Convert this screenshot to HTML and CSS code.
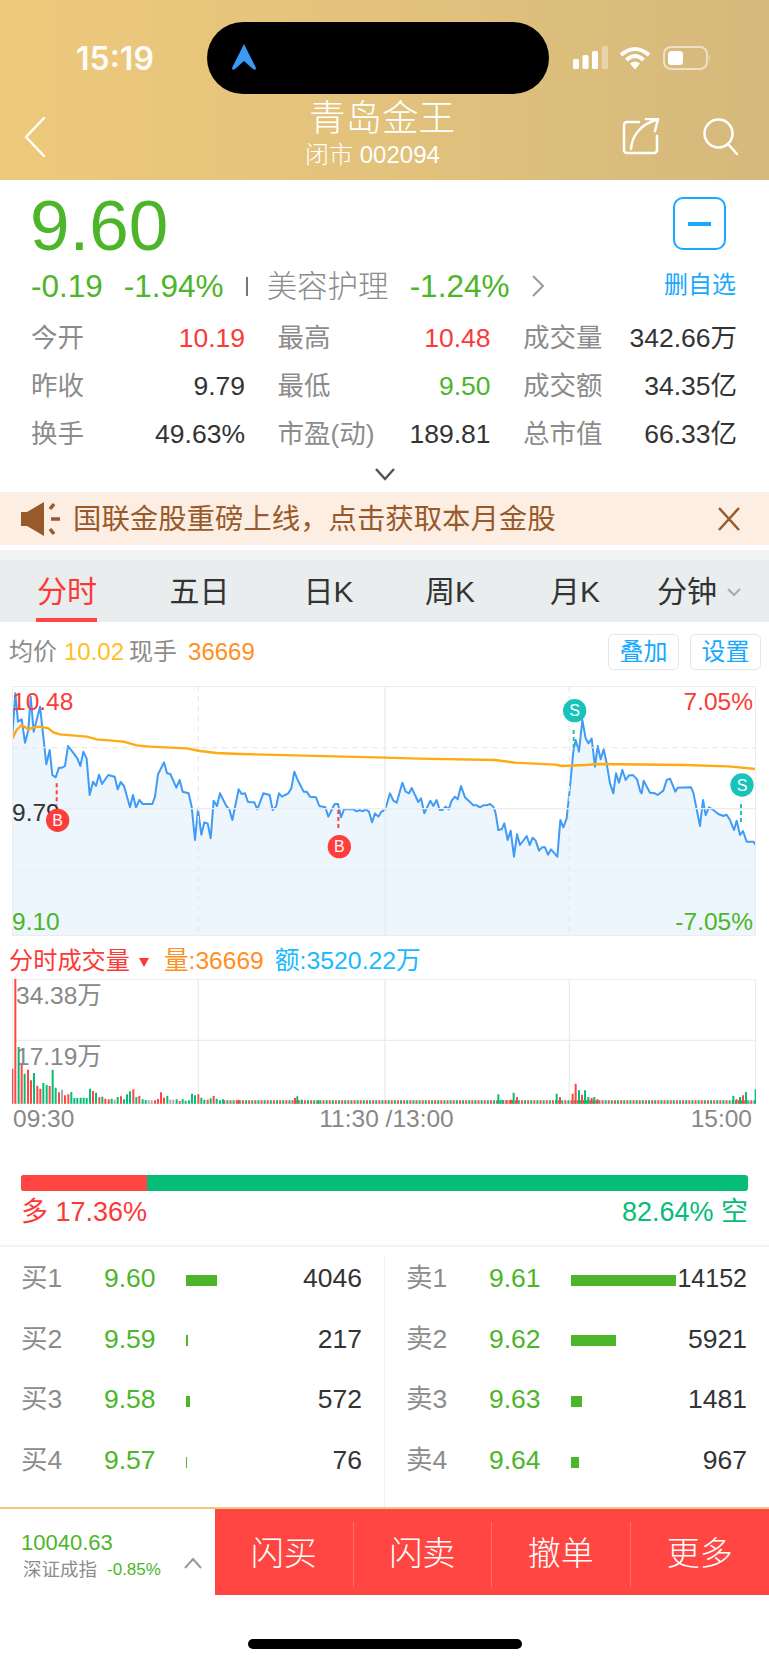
FILE: index.html
```html
<!DOCTYPE html>
<html lang="zh">
<head>
<meta charset="utf-8">
<title>青岛金王</title>
<link rel="stylesheet" href="styles.css">
</head>
<body>
<div class="page">
  <header class="header">
    <div class="status">
      <span class="time">15:19</span>
      <div class="island">
        <svg class="nav-arrow" width="26" height="28" viewBox="0 0 26 28"><path d="M13 1 L25 25 Q25 28 22 26 L13 18 L4 26 Q1 28 1 25 Z"/></svg>
      </div>
      <div class="status-right">
        <svg width="36" height="24" viewBox="0 0 36 24"><rect class="wh" x="0" y="13" width="6" height="10" rx="1.5"/><rect class="wh" x="9.5" y="9" width="6" height="14" rx="1.5"/><rect class="wh" x="19" y="5" width="6" height="18" rx="1.5"/><rect class="wh-dim" x="29" y="0" width="6" height="23" rx="1.5"/></svg>
        <svg class="wifi" width="32" height="24" viewBox="0 0 32 24"><path class="wifi-s" d="M2 9 Q16 -3 30 9"/><path class="wifi-s" d="M7.5 14 Q16 6 24.5 14"/><path class="wh" d="M11 17.5 Q16 13.5 21 17.5 L16 23.5 Z"/></svg>
        <svg class="batt" width="50" height="24" viewBox="0 0 50 24"><rect class="batt-box" x="1" y="1" width="43" height="22" rx="7"/><rect class="wh" x="5" y="5" width="15" height="14" rx="3.5"/><path class="wh-dim" d="M46 8 Q49 12 46 16 Z"/></svg>
      </div>
    </div>
    <nav class="nav">
      <svg class="back" width="22" height="40" viewBox="0 0 22 40"><path class="nav-s" d="M20 1 L2 20 L20 39"/></svg>
      <div class="title-box">
        <div class="title">青岛金王</div>
        <div class="subtitle">闭市 002094</div>
      </div>
      <div class="nav-icons">
        <svg width="38" height="38" viewBox="624 117 38 38"><path class="nav-s" d="M641 121 H629 a3 3 0 0 0 -3 3 V149 a3 3 0 0 0 3 3 H656 a3 3 0 0 0 3 -3 V135"/><path class="nav-s" d="M633 148 C634 135 642 124 658 119 M648 118 L660 118 L657 130"/></svg>
        <svg width="38" height="38" viewBox="704 117 38 38"><circle class="nav-s" cx="720.500" cy="132.500" r="14"/><path class="nav-s" d="M730 143 L739 153"/></svg>
      </div>
    </nav>
  </header>

  <section class="quote">
    <div class="quote-main">
      <div>
        <div class="price">9.60</div>
        <div class="change">
          <span class="chg-a">-0.19</span>
          <span class="chg-b">-1.94%</span>
          <span class="bar-sep"></span>
          <span class="sector">美容护理</span>
          <span class="chg-c">-1.24%</span>
          <svg width="14" height="22" viewBox="0 0 14 22"><path class="chev-grey" d="M2 1 L12 11 L2 21"/></svg>
        </div>
      </div>
      <div class="fav">
        <div class="fav-box"><span class="fav-minus"></span></div>
        <div class="fav-text">删自选</div>
      </div>
    </div>
    <div class="stats">
      <div class="stat"><span class="lbl">今开</span><span class="red">10.19</span></div>
      <div class="stat"><span class="lbl">最高</span><span class="red">10.48</span></div>
      <div class="stat"><span class="lbl">成交量</span><span>342.66万</span></div>
      <div class="stat"><span class="lbl">昨收</span><span>9.79</span></div>
      <div class="stat"><span class="lbl">最低</span><span class="green">9.50</span></div>
      <div class="stat"><span class="lbl">成交额</span><span>34.35亿</span></div>
      <div class="stat"><span class="lbl">换手</span><span>49.63%</span></div>
      <div class="stat"><span class="lbl">市盈(动)</span><span>189.81</span></div>
      <div class="stat"><span class="lbl">总市值</span><span>66.33亿</span></div>
    </div>
    <div class="expand"><svg width="22" height="14" viewBox="0 0 22 14"><path class="chev-dark" d="M2 2 L11 12 L20 2"/></svg></div>
  </section>

  <div class="banner">
    <svg width="40" height="34" viewBox="0 0 40 34"><path class="brown" d="M0 10 H6 L23 0 V34 L6 24 H0 Z"/><path class="brown-s" d="M29 7 L33 2 M30 17 H39 M29 27 L33 32"/></svg>
    <span class="banner-text">国联金股重磅上线&#xFF0C;点击获取本月金股</span>
    <svg class="banner-x" width="24" height="24" viewBox="0 0 24 24"><path class="brown-s thin" d="M2 1 L22 23 M22 1 L2 23"/></svg>
  </div>

  <div class="strip"></div>
  <div class="tabs">
    <div class="tab active">分时</div>
    <div class="tab">五日</div>
    <div class="tab">日K</div>
    <div class="tab">周K</div>
    <div class="tab">月K</div>
    <div class="tab last">分钟<svg width="14" height="9" viewBox="0 0 14 9"><path class="chev-light" d="M1 1 L7 7 L13 1"/></svg></div>
  </div>

  <div class="info">
    <span class="lbl">均价</span><span class="yellow gap-a">10.02</span><span class="lbl gap-b">现手</span><span class="orange gap-c">36669</span>
    <div class="info-btns"><span class="btn">叠加</span><span class="btn">设置</span></div>
  </div>

  <div class="chart">
    <svg class="chart-svg" width="744" height="250" viewBox="36 18 2232 750">
      <polygon class="price-line" points="20,900 20,178 36,178 46,40 54,125 65,118 75,188 85,150 92,50 101,155 120,80 130,170 139,253 149,210 157,285 167,292 177,263 186,263 195,258 204,198 215,212 232,235 241,258 250,215 260,236 269,345 279,305 288,318 297,284 306,312 325,285 344,290 353,328 362,306 372,318 390,382 399,345 408,383 418,360 428,372 457,372 465,350 474,283 492,247 501,280 511,282 529,323 539,300 548,335 566,340 575,380 585,480 594,388 604,464 613,427 623,430 632,475 641,362 651,378 660,340 679,378 688,388 697,420 716,328 725,342 735,340 744,366 763,367 772,388 790,340 809,345 818,390 828,380 837,340 846,350 865,340 874,325 883,275 893,300 911,335 920,335 930,350 948,352 958,378 976,382 985,410 1004,372 1014,372 1023,412 1032,388 1060,388 1070,394 1079,390 1088,394 1097,388 1107,395 1116,427 1125,400 1135,410 1144,395 1155,390 1170,340 1180,362 1190,368 1207,308 1217,335 1227,340 1235,324 1255,366 1263,355 1273,400 1291,362 1300,378 1310,360 1319,390 1327,390 1337,380 1346,388 1355,362 1365,350 1373,358 1383,318 1395,352 1420,376 1430,376 1440,382 1450,376 1460,376 1470,372 1480,380 1487,400 1495,450 1505,448 1513,430 1523,480 1532,452 1542,530 1551,463 1560,495 1580,468 1589,495 1598,473 1607,482 1617,512 1626,502 1635,502 1644,524 1653,508 1672,530 1681,420 1690,442 1700,415 1708,340 1720,215 1727,180 1737,215 1747,120 1757,175 1765,190 1775,176 1785,260 1793,198 1802,238 1811,208 1820,250 1830,310 1840,340 1848,280 1857,308 1867,270 1877,300 1887,286 1900,286 1911,298 1921,335 1925,340 1931,302 1950,338 1965,340 1973,345 1990,332 2000,300 2010,296 2026,335 2033,323 2073,322 2080,338 2100,438 2109,360 2117,405 2127,382 2137,388 2155,402 2170,408 2180,404 2190,420 2202,450 2210,422 2220,465 2229,453 2240,485 2260,485 2267,495 2300,495 2300,900"/>
      <path class="grid-dash" d="M595 18 V768 M1708 18 V768 M36 203 H2268"/>
      <path class="grid" d="M1155 18 V768 M36 386 H2268"/>
      <path class="grid-faint" d="M36 570 H2268"/>
      <polyline class="avg-line" points="36,178 50,150 65,135 85,148 100,142 120,140 145,145 160,157 180,163 260,170 290,178 370,185 410,196 450,200 560,205 600,213 650,219 720,222 1155,233 1255,236 1485,240 1545,248 1665,254 1685,258 1755,255 1795,252 2055,255 2185,259 2267,267"/>
      <rect class="frame" x="36" y="18" width="2232" height="750"/>
    </svg>
    <span class="ch-l ch-top red">10.48</span>
    <span class="ch-l ch-mid">9.79</span>
    <span class="ch-l ch-bot green">9.10</span>
    <span class="ch-r ch-top red">7.05%</span>
    <span class="ch-r ch-bot green">-7.05%</span>
    <svg class="chart-marks" width="744" height="250" viewBox="36 18 2232 750">
      <path class="dash-red" d="M170 310 V375 M1015 390 V450"/>
      <path class="dash-teal" d="M1721 150 V205 M2223 372 V435"/>
      <circle class="mark-red" cx="173" cy="421" r="35"/>
      <circle class="mark-red" cx="1018" cy="500" r="35"/>
      <circle class="mark-teal" cx="1724" cy="92" r="35"/>
      <circle class="mark-teal" cx="2226" cy="315" r="35"/>
      <text class="mark-t" x="173" y="438">B</text>
      <text class="mark-t" x="1018" y="517">B</text>
      <text class="mark-t" x="1724" y="109">S</text>
      <text class="mark-t" x="2226" y="332">S</text>
    </svg>
  </div>

  <div class="vol-head">
    <span class="red">分时成交量</span><span class="tri"></span><span class="orange v-a">量:36669</span><span class="blue v-b">额:3520.22万</span>
  </div>
  <div class="vol">
    <svg class="chart-svg" width="744" height="125" viewBox="36 116 2232 375">
      <path class="grid" d="M595 116 V490 M1155 116 V490 M1708 116 V490 M36 300 H2268"/>
      <rect class="frame" x="36" y="116" width="2232" height="375"/>
      <path class="low-r" d="M670 485 H2268"/>
      <path class="low-g" d="M670 485 H2268"/>
      <path class="bar-r" d="M37 490V385M46 490V116M65 490V370M84 490V388M93 490V420M112 490V436M121 490V445M149 490V437M177 490V456M195 490V465M205 490V462M279 490V452M298 490V471M316 490V475M326 490V477M363 490V468M400 490V447M418 490V467M465 490V480M474 490V476M483 490V456M492 490V472M539 490V482M595 490V462M623 490V478M641 490V467M715 490V478M885 490V473M1520 490V480M1533 490V478M1551 490V470M1680 490V470M1718 490V460M1727 490V430M1746 490V463M1775 490V473M1793 490V477M2210 490V477M2229 490V465"/>
      <path class="bar-g" d="M56 490V320M74 490V400M102 490V398M130 490V428M140 490V433M158 490V388M167 490V442M214 490V455M223 490V473M232 490V473M242 490V472M251 490V472M260 490V473M270 490V445M288 490V457M307 490V469M335 490V475M353 490V470M372 490V477M381 490V462M390 490V453M409 490V470M428 490V477M437 490V479M502 490V467M530 490V477M548 490V477M557 490V481M567 490V480M576 490V460M585 490V465M604 490V472M613 490V478M632 490V474M650 490V475M660 490V480M669 490V477M892 490V468M905 490V478M955 490V480M1495 490V462M1507 490V478M1541 490V457M1670 490V460M1737 490V450M1755 490V450M1765 490V470M1783 490V470M2200 490V467M2220 490V470M2238 490V455M2267 490V447"/>
      <path class="bar-n" d="M186 490V448M344 490V478M446 490V480M455 490V480M511 490V478M520 490V478M2248 490V485"/>
    </svg>
    <span class="vol-l vol-1">34.38万</span>
    <span class="vol-l vol-2">17.19万</span>
  </div>
  <div class="axis"><span>09:30</span><span class="axis-mid">11:30 /13:00</span><span>15:00</span></div>

  <section class="ls">
    <div class="ls-bar"><div class="ls-red"></div></div>
    <div class="ls-text"><span class="red">多 17.36%</span><span class="teal">82.64% 空</span></div>
  </section>

  <section class="book">
    <div class="book-col">
      <div class="row"><span class="lbl r-l">买1</span><span class="green r-p">9.60</span><span class="r-b"><i class="vbar" style="width:31px"></i></span><span>4046</span></div>
      <div class="row"><span class="lbl r-l">买2</span><span class="green r-p">9.59</span><span class="r-b"><i class="vbar" style="width:2px"></i></span><span>217</span></div>
      <div class="row"><span class="lbl r-l">买3</span><span class="green r-p">9.58</span><span class="r-b"><i class="vbar" style="width:4px"></i></span><span>572</span></div>
      <div class="row"><span class="lbl r-l">买4</span><span class="green r-p">9.57</span><span class="r-b"><i class="vbar" style="width:1px"></i></span><span>76</span></div>
    </div>
    <div class="book-col right">
      <div class="row"><span class="lbl r-l">卖1</span><span class="green r-p">9.61</span><span class="r-b"><i class="vbar" style="width:105px"></i></span><span class="qty-fit">14152</span></div>
      <div class="row"><span class="lbl r-l">卖2</span><span class="green r-p">9.62</span><span class="r-b"><i class="vbar" style="width:45px"></i></span><span>5921</span></div>
      <div class="row"><span class="lbl r-l">卖3</span><span class="green r-p">9.63</span><span class="r-b"><i class="vbar" style="width:11px"></i></span><span>1481</span></div>
      <div class="row"><span class="lbl r-l">卖4</span><span class="green r-p">9.64</span><span class="r-b"><i class="vbar" style="width:8px"></i></span><span>967</span></div>
    </div>
  </section>

  <footer class="foot">
    <div class="index">
      <div>
        <div class="idx-num">10040.63</div>
        <div class="idx-sub"><span class="idx-name">深证成指</span><span class="idx-pct">-0.85%</span></div>
      </div>
      <svg class="idx-chev" width="18" height="12" viewBox="0 0 18 12"><path class="chev-grey" d="M1 11 L9 2 L17 11"/></svg>
    </div>
    <div class="actions">
      <div class="act">闪买</div>
      <div class="act">闪卖</div>
      <div class="act">撤单</div>
      <div class="act">更多</div>
    </div>
  </footer>
  <div class="home"><div class="home-bar"></div></div>
</div>
</body>
</html>
```
FILE: styles.css
```css
* { box-sizing: border-box; }
html, body { margin: 0; padding: 0; background: #fff; }
body { font-family: "Liberation Sans", "Noto Sans CJK SC", sans-serif; color: #333; font-size: 26px; }
.page { width: 769px; height: 1665px; overflow: hidden; }

.red { color: #fb3a38; }
.green { color: #4cb529; }
.teal { color: #05bd77; }
.yellow { color: #fdc01e; }
.orange { color: #ff8f1f; }
.blue { color: #17b9ff; }
.lbl { color: #8c8c8c; }

/* header */
.header { height: 180px; background: linear-gradient(90deg, #edc97b 0%, #e2c27c 50%, #d5b97c 100%); color: #fff; position: relative; }
.status { height: 94px; padding: 22px 56px 0 76px; display: flex; justify-content: space-between; align-items: center; }
.time { font-size: 32px; font-weight: 600; font-family: Inter, "Liberation Sans", sans-serif; opacity: .95; }
.island { position: absolute; left: 207px; top: 22px; width: 342px; height: 72px; border-radius: 36px; background: #000; }
.nav-arrow { position: absolute; left: 24px; top: 21px; fill: #3a9bf5; }
.status-right { display: flex; align-items: center; gap: 10px; }
.wifi { margin-right: 2px; }
.wh { fill: #fff; }
.wh-dim { fill: rgba(255,255,255,.35); }
.wifi-s { fill: none; stroke: #fff; stroke-width: 4; }
.batt-box { fill: none; stroke: rgba(255,255,255,.55); stroke-width: 2; }
.nav { height: 86px; padding: 0 29px 0 24px; display: grid; grid-template-columns: 1fr auto 1fr; align-items: center; }
.nav-s { fill: none; stroke: #fff; stroke-width: 2.5; stroke-linecap: round; stroke-linejoin: round; }
.title-box { text-align: center; margin-top: -4px; }
.title { font-size: 36.5px; line-height: 40px; font-weight: 300; }
.subtitle { font-size: 24px; line-height: 32px; margin-left: -19px; font-weight: 300; }
.nav-icons { display: flex; justify-content: flex-end; gap: 42px; }

/* quote */
.quote-main { height: 134px; padding: 11px 33px 0 30px; display: flex; justify-content: space-between; }
.price { font-size: 71px; line-height: 70px; color: #4cb529; }
.change { margin-top: 5px; margin-left: 1px; height: 40px; display: flex; align-items: center; font-size: 31.5px; line-height: 40px; color: #4cb529; white-space: nowrap; }
.chg-b { margin-left: 21px; }
.bar-sep { width: 2px; height: 19px; background: #777; margin: 0 19px 0 22px; }
.sector { color: #8c8c8c; font-size: 30.5px; font-weight: 300; }
.chg-c { margin: 0 22px 0 21px; }
.chev-grey { fill: none; stroke: #999; stroke-width: 2; }
.chev-dark { fill: none; stroke: #555; stroke-width: 2.5; }
.chev-light { fill: none; stroke: #aaa; stroke-width: 2; }
.fav { width: 72px; display: flex; flex-direction: column; align-items: center; padding-top: 6px; }
.fav-box { width: 53px; height: 53px; border: 2px solid #17a8ff; border-radius: 10px; display: flex; align-items: center; justify-content: center; margin-left: -1px; }
.fav-minus { display: block; width: 23px; height: 4px; background: #17a8ff; }
.fav-text { margin-top: 20px; font-size: 24px; line-height: 30px; color: #17a8ff; white-space: nowrap; }
.stats { padding: 0 31px; display: grid; grid-template-columns: 214px 213px 214px; column-gap: 32.5px; height: 144px; font-size: 26.5px; }
.stat { height: 48px; line-height: 30px; display: flex; justify-content: space-between; align-items: center; }
.expand { height: 34px; padding-top: 9px; text-align: center; }
.expand svg { display: block; margin: 0 auto; }

/* banner */
.banner { height: 53px; background: #fdeee4; padding: 0 28px 0 21px; display: flex; align-items: center; color: #995a2b; }
.banner-text { margin-left: 12px; font-size: 28.4px; line-height: 34px; white-space: nowrap; }
.banner-x { margin-left: auto; }
.brown { fill: #995a2b; }
.brown-s { fill: none; stroke: #995a2b; stroke-width: 3.5; }
.brown-s.thin { stroke-width: 2.5; }
.strip { height: 10px; margin-top: 5px; background: #f2f3f3; }
.tabs { height: 62px; background: #e9edee; display: grid; grid-template-columns: 134px 131px 127px 116px 134px 1fr; font-size: 30px; line-height: 36px; }
.tab { display: flex; align-items: center; justify-content: center; padding-top: 2px; }
.tab.active { color: #fb3a38; position: relative; }
.tab.active::after { content: ""; position: absolute; left: 36px; bottom: 0; width: 61px; height: 4px; background: #ff4642; }
.tab.last { justify-content: flex-start; padding-left: 15px; }
.tab.last svg { margin-left: 10px; }

/* info */
.info { height: 58px; padding: 2px 8px 0 9px; display: flex; align-items: center; font-size: 24px; line-height: 30px; }
.gap-a { margin-left: 7px; }
.gap-b { margin-left: 5px; }
.gap-c { margin-left: 11px; }
.info-btns { margin-left: auto; display: flex; gap: 11px; }
.btn { width: 71px; height: 36px; border: 1px solid #e6e6e6; border-radius: 5px; color: #17a8ff; display: flex; align-items: center; justify-content: center; font-size: 24px; }

/* chart */
.chart { margin: 6px 0 0 12px; width: 744px; height: 250px; position: relative; }
.chart-svg, .chart-marks { display: block; overflow: hidden; }
.chart-marks { position: absolute; left: 0; top: 0; }
.price-line { fill: #edf5fd; stroke: #3f9bf5; stroke-width: 6; stroke-linejoin: round; }
.avg-line { fill: none; stroke: #ffab0f; stroke-width: 7; }
.frame { fill: none; stroke: #ececec; stroke-width: 6; }
.grid { fill: none; stroke: #ececec; stroke-width: 4; }
.grid-faint { fill: none; stroke: #e8eef4; stroke-width: 3; }
.grid-dash { fill: none; stroke: #e9e9e9; stroke-width: 4; stroke-dasharray: 16 14; }
.ch-l, .ch-r { position: absolute; font-size: 24.5px; line-height: 28px; }
.ch-l { left: 0; }
.ch-r { right: 3px; }
.ch-top { top: 2px; }
.ch-mid { top: 113px; color: #333; }
.ch-bot { top: 222px; }
.dash-red { fill: none; stroke: #ff3d3d; stroke-width: 6; stroke-dasharray: 12 9; }
.dash-teal { fill: none; stroke: #18c3ba; stroke-width: 6; stroke-dasharray: 12 9; }
.mark-red { fill: #ff3d3d; }
.mark-teal { fill: #18c3ba; }
.mark-t { fill: #fff; font-size: 48px; text-anchor: middle; font-family: "Liberation Sans", sans-serif; }

.vol-head { height: 43px; padding: 7px 0 0 9px; display: flex; align-items: center; font-size: 24.2px; line-height: 30px; }
.tri { width: 0; height: 0; margin: 2px 0 0 9px; border-left: 5px solid transparent; border-right: 5px solid transparent; border-top: 9px solid #fb3a38; }
.v-a { margin-left: 15px; font-size: 24.6px; }
.v-b { margin-left: 11px; font-size: 24.8px; }
.vol { margin-left: 12px; width: 744px; height: 125px; position: relative; }
.vol-l { position: absolute; left: 4px; font-size: 24.5px; line-height: 28px; color: #888; }
.vol-1 { top: 3px; }
.vol-2 { top: 64px; }
.bar-r, .bar-g, .bar-n, .low-r, .low-g { fill: none; stroke-width: 6; }
.bar-r { stroke: #ff4642; }
.bar-g { stroke: #05bd77; }
.bar-n { stroke: #aaa; }
.low-r { stroke: #ff4642; stroke-width: 10; stroke-dasharray: 6 12.6; }
.low-g { stroke: #05bd77; stroke-width: 10; stroke-dasharray: 6 12.6; stroke-dashoffset: -9.3; }
.axis { height: 31px; padding: 0 17px 2px 13px; display: flex; justify-content: space-between; align-items: center; font-size: 24.5px; color: #888; }
.axis-mid { margin-left: 8px; }

/* long/short */
.ls { padding: 40px 21px 0; height: 112px; border-bottom: 2px solid #f4f4f4; }
.ls-bar { height: 16px; border-radius: 3px; background: #05bd77; overflow: hidden; }
.ls-red { width: 126px; height: 16px; background: #ff4642; }
.ls-text { display: flex; justify-content: space-between; line-height: 42px; font-size: 27px; }

/* order book */
.book { height: 250px; margin-top: 10px; display: grid; grid-template-columns: 384px 1fr; font-size: 26.5px; }
.book-col { padding: 0 22px 0 21px; display: flex; flex-direction: column; gap: 18.7px; }
.book-col.right { border-left: 1px solid #f0f0f0; padding-left: 21px; padding-right: 22px; }
.row { height: 42px; line-height: 30px; display: flex; align-items: center; }
.r-l { width: 83px; }
.r-p { width: 82px; }
.r-b { flex: 1; min-width: 0; display: flex; }
.vbar { display: block; flex: none; height: 11px; margin-top: 4px; background: #4cb529; }
.qty-fit { font-size: 25px; }

/* footer */
.foot { height: 88px; border-top: 2px solid #edc97b; display: flex; }
.index { width: 215px; padding: 21px 13px 0 21px; display: flex; justify-content: space-between; }
.idx-num { font-size: 22px; line-height: 26px; color: #4cb529; }
.idx-sub { margin-top: 2px; line-height: 24px; display: flex; align-items: center; }
.idx-name { font-size: 18.5px; color: #8c8c8c; margin-left: 2px; }
.idx-pct { font-size: 17px; margin-left: 10px; color: #4cb529; white-space: nowrap; }
.idx-chev { margin-top: 27px; flex: none; }
.actions { flex: 1; height: 86px; background: #ff4642; display: grid; grid-template-columns: repeat(4, 1fr); align-items: center; padding: 13px 0 8px; }
.act { color: #fff; font-size: 33px; line-height: 40px; height: 65px; display: flex; align-items: center; justify-content: center; padding-bottom: 2px; font-weight: 300; border-right: 1px solid rgba(255,255,255,.22); }
.act:last-child { border-right: 0; }
.home { padding-top: 44px; }
.home-bar { width: 274px; height: 10px; margin: 0 auto; border-radius: 5px; background: #000; }
```
